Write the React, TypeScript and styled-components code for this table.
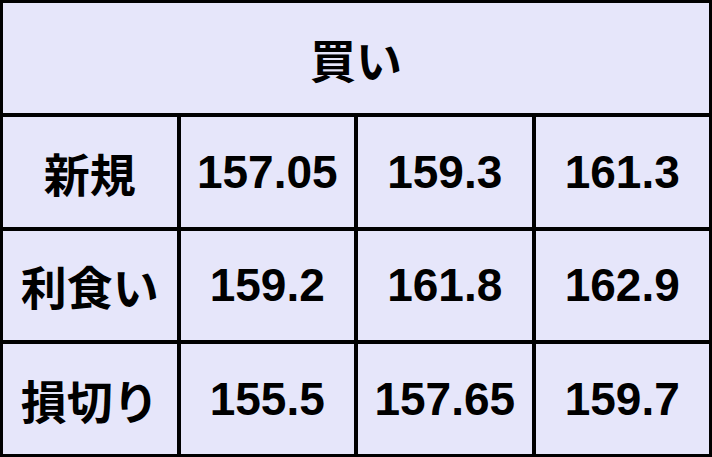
import { Fragment } from "react";
import styled, { createGlobalStyle } from "styled-components";

const GlobalStyle = createGlobalStyle`
  html, body {
    margin: 0;
    padding: 0;
    background: #ffffff;
  }
`;

const rows = [
  { label: "新規", values: ["157.05", "159.3", "161.3"] },
  { label: "利食い", values: ["159.2", "161.8", "162.9"] },
  { label: "損切り", values: ["155.5", "157.65", "159.7"] },
];

const Board = styled.div`
  box-sizing: border-box;
  width: 712px;
  height: 457px;
  padding: 3px;
  background: #000000;
  display: grid;
  grid-template-columns: repeat(4, 1fr);
  grid-template-rows: repeat(4, 1fr);
  gap: 4px;
  font-family: "Liberation Sans", Arial, "Noto Sans CJK JP", sans-serif;
  font-weight: bold;
  color: #000000;
`;

const Cell = styled.div<{ $span?: number }>`
  grid-column: span ${(p) => p.$span ?? 1};
  background: #e6e6fa;
  display: flex;
  align-items: center;
  justify-content: center;
  font-size: 46px;
  line-height: 1;
  white-space: nowrap;
`;

const Label = styled.span`
  font-family: "Noto Sans CJK JP", sans-serif;
  font-weight: 700;
  font-size: 46px;
`;

const App = () => {
  return (
    <>
      <GlobalStyle />
      <Board>
        <Cell $span={4}>
          <Label>買い</Label>
        </Cell>
        {rows.map((row) => (
          <Fragment key={row.label}>
            <Cell>
              <Label>{row.label}</Label>
            </Cell>
            {row.values.map((v, i) => (
              <Cell key={i}>{v}</Cell>
            ))}
          </Fragment>
        ))}
      </Board>
    </>
  );
};

export default App;
